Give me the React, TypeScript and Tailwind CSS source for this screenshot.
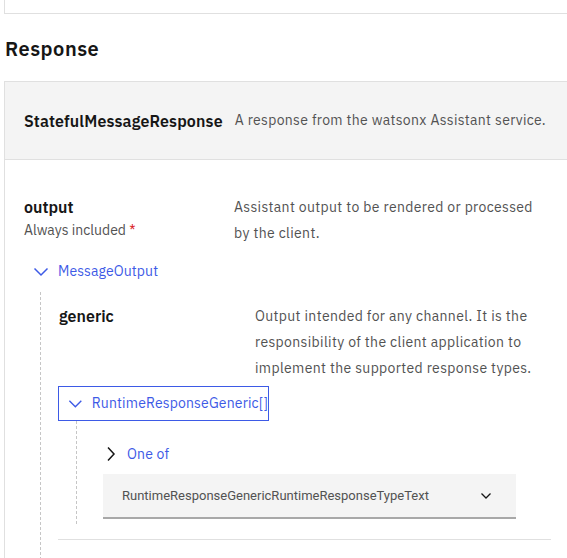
import React from "react";

function ChevDown({ className = "" }: { className?: string }) {
  return (
    <svg width="16" height="10" viewBox="0 0 16 10" className={className} fill="none">
      <polyline points="1.5,1.5 8,8 14.5,1.5" stroke="currentColor" strokeWidth="1.5" />
    </svg>
  );
}

export default function App() {
  return (
    <div className="min-h-[558px] bg-white overflow-hidden text-[#161616] font-['IBM_Plex_Sans',Roboto,'Liberation_Sans',sans-serif]">
      <div className="ml-[4px] h-[14px] border-l border-b border-[#e0e0e0]" />
      <h2 className="ml-[5px] mt-[21px] text-[20px] leading-[28px] font-semibold tracking-[0.5px]">Response</h2>
      <div className="ml-[4px] mt-[18px] border-l border-t border-[#e0e0e0] w-[600px]">
        <div className="h-[78px] bg-[#f4f4f4] border-b border-[#e0e0e0] flex items-center pl-[19px]">
          <span className="text-[16px] font-semibold tracking-[0.13px]">StatefulMessageResponse</span>
          <span className="ml-[12px] text-[14px] text-[#525252] tracking-[0.33px]">
            A response from the watsonx Assistant service.
          </span>
        </div>
        <div className="pt-[36px] pl-[19px] w-[563px] pb-[40px]">
          <div className="flex">
            <div className="w-[210px] shrink-0">
              <div className="text-[16px] leading-[22px] font-semibold">output</div>
              <div className="text-[14px] leading-[24px] text-[#525252]">
                Always included <span className="text-[#da1e28]">*</span>
              </div>
            </div>
            <div className="w-[310px] text-[14px] leading-[26px] text-[#525252] tracking-[0.35px] -mt-[2px]">
              Assistant output to be rendered or processed by the client.
            </div>
          </div>
          <div className="mt-[15px] flex items-center pl-[9px] text-[#3d5ae6] text-[14px]">
            <ChevDown />
            <span className="ml-[9px] tracking-[0.1px]">MessageOutput</span>
          </div>
          <div className="ml-[16px] mt-[10px] border-l border-dashed border-[#c6c6c6] pl-[17px] pr-[17px] pt-[13px] pb-[40px]">
            <div className="border-b border-[#e0e0e0] pb-[15px]">
              <div className="flex">
                <div className="w-[197px] shrink-0 pl-[1px] text-[16px] leading-[22px] font-semibold">generic</div>
                <div className="flex-1 text-[14px] leading-[26px] text-[#525252] tracking-[0.35px] -mt-[2px]">
                  Output intended for any channel. It is the responsibility of the client application to implement the supported response types.
                </div>
              </div>
              <div className="mt-[5px] w-[211px] h-[35px] border border-[#3d5ae6] flex items-center pl-[9px] text-[#3d5ae6] text-[14px]">
                <ChevDown />
                <span className="ml-[9px] tracking-[0.16px]">RuntimeResponseGeneric[]</span>
              </div>
              <div className="ml-[18px] border-l border-dashed border-[#c6c6c6] pl-[26px] pt-[23px] pb-[5px]">
                <div className="flex items-center h-[20px] text-[14px]">
                  <svg width="10" height="16" viewBox="0 0 10 16" fill="none" className="ml-[3px]">
                    <polyline points="2,1.5 8,8 2,14.5" stroke="#161616" strokeWidth="1.5" />
                  </svg>
                  <span className="ml-[11px] text-[#3d5ae6] tracking-[0.16px]">One of</span>
                </div>
                <div className="mt-[10px] w-[413px] h-[45px] bg-[#f4f4f4] border-b-2 border-[#a8a8a8] flex items-center pl-[19px] text-[13px] text-[#525252] font-['Roboto','Liberation_Sans',sans-serif]">
                  <span>RuntimeResponseGenericRuntimeResponseTypeText</span>
                  <svg width="12" height="8" viewBox="0 0 12 8" fill="none" className="ml-[51px]">
                    <polyline points="1.5,1.5 6,6 10.5,1.5" stroke="#161616" strokeWidth="1.3" />
                  </svg>
                </div>
              </div>
            </div>
          </div>
        </div>
      </div>
    </div>
  );
}
